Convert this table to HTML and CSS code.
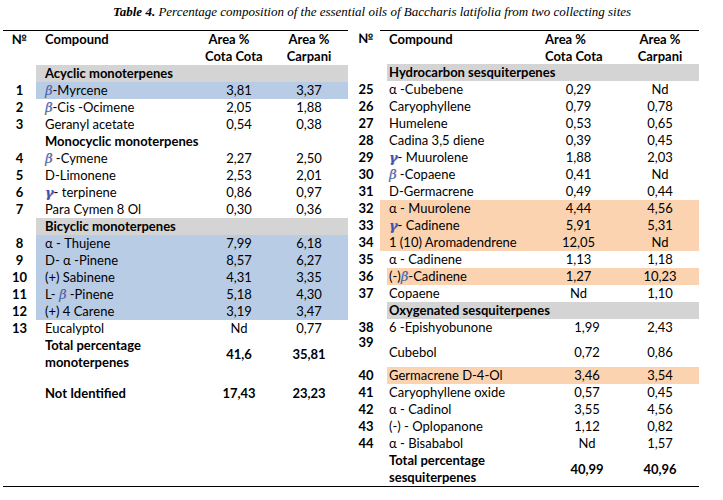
FILE: index.html
```html
<!DOCTYPE html>
<html>
<head>
<meta charset="utf-8">
<link rel="stylesheet" href="styles.css">
</head>
<body>
<div class="page">
  <p class="caption"><b>Table 4.</b> Percentage composition of the essential oils of Baccharis latifolia from two collecting sites</p>
  <div class="tables">
    <div class="tbl tbl-left">
      <div class="row head">
        <div class="num">№</div>
        <div class="body"><div class="name">Compound</div><div class="v1">Area %<br>Cota Cota</div><div class="v2">Area %<br>Carpani</div></div>
      </div>
      <div class="row sec"><div class="num"></div><div class="body gray"><div class="name">Acyclic monoterpenes</div></div></div>
      <div class="row"><div class="num">1</div><div class="body blue"><div class="name"><i class="gk">β</i>-Myrcene</div><div class="v1">3,81</div><div class="v2">3,37</div></div></div>
      <div class="row"><div class="num">2</div><div class="body"><div class="name"><i class="gk">β</i>-Cis -Ocimene</div><div class="v1">2,05</div><div class="v2">1,88</div></div></div>
      <div class="row"><div class="num">3</div><div class="body"><div class="name">Geranyl acetate</div><div class="v1">0,54</div><div class="v2">0,38</div></div></div>
      <div class="row sec"><div class="num"></div><div class="body"><div class="name">Monocyclic monoterpenes</div></div></div>
      <div class="row"><div class="num">4</div><div class="body"><div class="name"><i class="gk">β</i> -Cymene</div><div class="v1">2,27</div><div class="v2">2,50</div></div></div>
      <div class="row"><div class="num">5</div><div class="body"><div class="name">D-Limonene</div><div class="v1">2,53</div><div class="v2">2,01</div></div></div>
      <div class="row"><div class="num">6</div><div class="body"><div class="name"><i class="gk gm">γ</i>- terpinene</div><div class="v1">0,86</div><div class="v2">0,97</div></div></div>
      <div class="row"><div class="num">7</div><div class="body"><div class="name">Para Cymen 8 Ol</div><div class="v1">0,30</div><div class="v2">0,36</div></div></div>
      <div class="row sec"><div class="num"></div><div class="body gray"><div class="name">Bicyclic monoterpenes</div></div></div>
      <div class="row"><div class="num">8</div><div class="body blue"><div class="name">α - Thujene</div><div class="v1">7,99</div><div class="v2">6,18</div></div></div>
      <div class="row"><div class="num">9</div><div class="body blue"><div class="name">D- α -Pinene</div><div class="v1">8,57</div><div class="v2">6,27</div></div></div>
      <div class="row"><div class="num">10</div><div class="body blue"><div class="name">(+) Sabinene</div><div class="v1">4,31</div><div class="v2">3,35</div></div></div>
      <div class="row"><div class="num">11</div><div class="body blue"><div class="name">L- <i class="gk">β</i> -Pinene</div><div class="v1">5,18</div><div class="v2">4,30</div></div></div>
      <div class="row"><div class="num">12</div><div class="body blue"><div class="name">(+) 4 Carene</div><div class="v1">3,19</div><div class="v2">3,47</div></div></div>
      <div class="row"><div class="num">13</div><div class="body"><div class="name">Eucalyptol</div><div class="v1">Nd</div><div class="v2">0,77</div></div></div>
      <div class="row tall total"><div class="num"></div><div class="body"><div class="name">Total percentage<br>monoterpenes</div><div class="v1">41,6</div><div class="v2">35,81</div></div></div>
      <div class="row total nid"><div class="num"></div><div class="body"><div class="name">Not Identified</div><div class="v1">17,43</div><div class="v2">23,23</div></div></div>
    </div>

    <div class="tbl tbl-right">
      <div class="row head">
        <div class="num">№</div>
        <div class="body"><div class="name">Compound</div><div class="v1">Area %<br>Cota Cota</div><div class="v2">Area %<br>Carpani</div></div>
      </div>
      <div class="row sec"><div class="num"></div><div class="body gray inset"><div class="name">Hydrocarbon sesquiterpenes</div></div></div>
      <div class="row"><div class="num">25</div><div class="body"><div class="name">α -Cubebene</div><div class="v1">0,29</div><div class="v2">Nd</div></div></div>
      <div class="row"><div class="num">26</div><div class="body"><div class="name">Caryophyllene</div><div class="v1">0,79</div><div class="v2">0,78</div></div></div>
      <div class="row"><div class="num">27</div><div class="body"><div class="name">Humelene</div><div class="v1">0,53</div><div class="v2">0,65</div></div></div>
      <div class="row"><div class="num">28</div><div class="body"><div class="name">Cadina 3,5 diene</div><div class="v1">0,39</div><div class="v2">0,45</div></div></div>
      <div class="row"><div class="num">29</div><div class="body"><div class="name"><i class="gk gm">γ</i>- Muurolene</div><div class="v1">1,88</div><div class="v2">2,03</div></div></div>
      <div class="row"><div class="num">30</div><div class="body"><div class="name"><i class="gk">β</i> -Copaene</div><div class="v1">0,41</div><div class="v2">Nd</div></div></div>
      <div class="row"><div class="num">31</div><div class="body"><div class="name">D-Germacrene</div><div class="v1">0,49</div><div class="v2">0,44</div></div></div>
      <div class="row"><div class="num">32</div><div class="body orange"><div class="name">α - Muurolene</div><div class="v1">4,44</div><div class="v2">4,56</div></div></div>
      <div class="row"><div class="num">33</div><div class="body orange"><div class="name"><i class="gk gm">γ</i>- Cadinene</div><div class="v1">5,91</div><div class="v2">5,31</div></div></div>
      <div class="row"><div class="num">34</div><div class="body orange"><div class="name">1 (10) Aromadendrene</div><div class="v1">12,05</div><div class="v2">Nd</div></div></div>
      <div class="row"><div class="num">35</div><div class="body"><div class="name">α - Cadinene</div><div class="v1">1,13</div><div class="v2">1,18</div></div></div>
      <div class="row"><div class="num">36</div><div class="body orange inset"><div class="name">(-)<i class="gk">β</i>-Cadinene</div><div class="v1">1,27</div><div class="v2">10,23</div></div></div>
      <div class="row"><div class="num">37</div><div class="body"><div class="name">Copaene</div><div class="v1">Nd</div><div class="v2">1,10</div></div></div>
      <div class="row sec"><div class="num"></div><div class="body gray inset"><div class="name">Oxygenated sesquiterpenes</div></div></div>
      <div class="row oxy"><div class="num">38</div><div class="body"><div class="name">6 -Epishyobunone</div><div class="v1">1,99</div><div class="v2">2,43</div></div></div>
      <div class="row oxy cub"><div class="num">39</div><div class="body"><div class="name">Cubebol</div><div class="v1">0,72</div><div class="v2">0,86</div></div></div>
      <div class="row oxy"><div class="num">40</div><div class="body orange inset"><div class="name">Germacrene D-4-Ol</div><div class="v1">3,46</div><div class="v2">3,54</div></div></div>
      <div class="row oxy"><div class="num">41</div><div class="body"><div class="name">Caryophyllene oxide</div><div class="v1">0,57</div><div class="v2">0,45</div></div></div>
      <div class="row oxy"><div class="num">42</div><div class="body"><div class="name">α - Cadinol</div><div class="v1">3,55</div><div class="v2">4,56</div></div></div>
      <div class="row oxy"><div class="num">43</div><div class="body"><div class="name">(-) - Oplopanone</div><div class="v1">1,12</div><div class="v2">0,82</div></div></div>
      <div class="row oxy"><div class="num">44</div><div class="body"><div class="name">α - Bisababol</div><div class="v1">Nd</div><div class="v2">1,57</div></div></div>
      <div class="row oxy tall total"><div class="num"></div><div class="body"><div class="name">Total percentage<br>sesquiterpenes</div><div class="v1">40,99</div><div class="v2">40,96</div></div></div>
    </div>
  </div>
</div>
</body>
</html>
```

FILE: styles.css
```css
html, body {
  margin: 0;
  padding: 0;
  background: #fff;
}

body {
  font-family: Lato, "Open Sans", sans-serif;
  font-size: 13px;
  color: #000;
}

.page {
  width: 723px;
  height: 500px;
  overflow: hidden;
}

.caption {
  margin: 0;
  height: 30px;
  box-sizing: border-box;
  padding: 4px 0 0 113px;
  font-family: "Liberation Serif", "Times New Roman", serif;
  font-style: italic;
  font-size: 13px;
  line-height: 16px;
  white-space: nowrap;
}

.tables {
  display: flex;
  align-items: flex-start;
  margin-left: 3px;
  width: 696px;
  border-bottom: 1px solid #000;
}

.row {
  display: flex;
  height: 17px;
  line-height: 17px;
  white-space: nowrap;
}

.num {
  font-weight: 700;
  text-align: center;
}

.body {
  flex: 1;
  display: flex;
  align-items: center;
  min-width: 0;
}

.name {
  box-sizing: border-box;
  padding-left: 9px;
}

.v1, .v2 {
  box-sizing: border-box;
  text-align: center;
}

/* left table geometry */
.tbl-left { width: 345px; }
.tbl-left .num { width: 33px; }
.tbl-left .name { width: 169px; }
.tbl-left .v1 { width: 68px; }
.tbl-left .v2 { width: 75px; padding-right: 3px; }
.tbl-left .head .v1 { padding-right: 20px; }
.tbl-left .head { border-top: 1px solid #000; }

/* right table geometry */
.tbl-right { width: 351px; }
.tbl-right .num { width: 32px; padding-left: 4px; box-sizing: border-box; }
.tbl-right .name { width: 165px; }
.tbl-right .v1 { width: 67px; }
.tbl-right .v2 { width: 87px; padding-left: 9px; }
.tbl-right .head .v1 { padding-right: 27px; }
.tbl-right .head .body { border-top: 1px solid #000; }
.tbl-right .oxy .v1 { padding-left: 17px; }

.body.inset { margin-left: 7px; }
.body.inset .name { padding-left: 2px; width: 158px; }

/* header */
.head {
  height: 34px;
}
.head .num,
.head .body {
  font-weight: 700;
  align-self: stretch;
}
.head .body { align-items: flex-start; }

/* section titles */
.sec .name {
  font-weight: 700;
  width: auto;
}
.sec .body { align-self: stretch; }

.gray { background: #d4d4d4; }
.blue { background: #b9cce5; }
.orange { background: #fbd3b0; }

.total .body { font-weight: 700; }

.tall { height: 34px; }
.tall .body { align-self: stretch; }

.nid { margin-top: 14px; }

.cub { height: 31px; }
.cub .num { align-self: flex-start; line-height: 13px; height: 13px; }
.cub .body { padding-top: 2px; }

.gk {
  font-family: "DejaVu Serif", "Liberation Serif", serif;
  font-style: italic;
  color: #3566c0;
  text-shadow: 1px 0 0 rgba(230, 150, 60, 0.55);
}
.gk.gm {
  font-weight: 700;
  color: #3b55b5;
}
```
